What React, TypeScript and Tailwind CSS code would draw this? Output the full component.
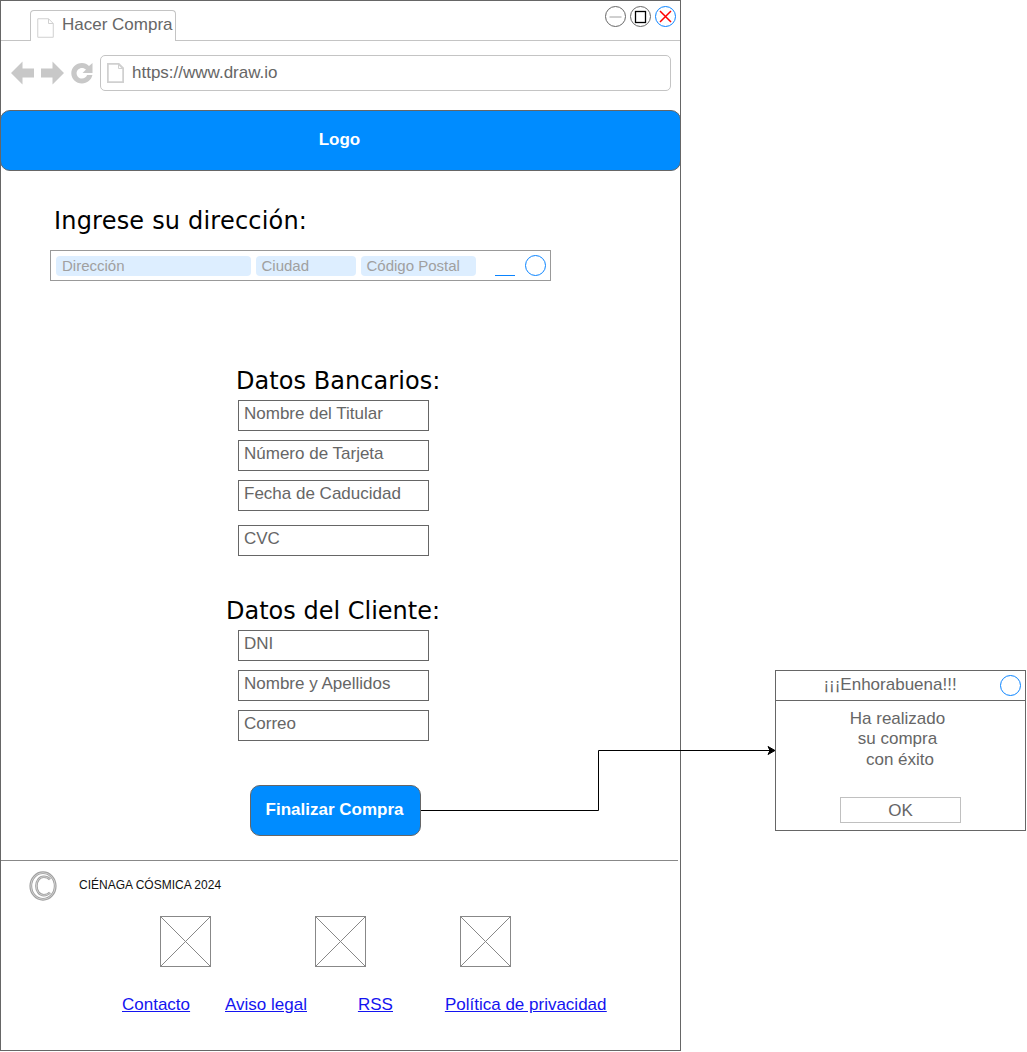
const sans = "font-['Liberation_Sans',Arial,sans-serif]";

const PageIcon = ({ className, thick = false }: { className: string; thick?: boolean }) => (
  <svg className={className} viewBox="0 0 17 20" fill="none">
    <path d="M0.75 0.75H11.5L16.25 5.5V19.25H0.75Z" fill="#fff" stroke="#d0d0d0" strokeWidth={thick ? 2 : 1} />
    <path d="M11.5 0.75V5.5H16.25" stroke="#d0d0d0" strokeWidth="1" />
  </svg>
);

const Field = ({ label, className = "" }: { label: string; className?: string }) => (
  <div className={`ml-[237px] h-[31px] w-[191px] border border-[#666] px-[5px] pt-[1px] text-[17px] leading-[23px] whitespace-nowrap text-[#666] ${className}`}>
    {label}
  </div>
);

const Pill = ({ label, className }: { label: string; className: string }) => (
  <div className={`h-[20px] rounded-[4px] bg-[#ddeeff] px-[6px] text-[15px] leading-[19px] whitespace-nowrap text-[#a0a0a0] ${className}`}>
    {label}
  </div>
);

const Placeholder = ({ className = "" }: { className?: string }) => (
  <svg className={`h-[51px] w-[51px] ${className}`} viewBox="0 0 51 51" fill="none" stroke="#888" strokeWidth="1">
    <rect x="0.5" y="0.5" width="50" height="50" />
    <path d="M0.5 0.5L50.5 50.5M50.5 0.5L0.5 50.5" />
  </svg>
);

const WindowButtons = () => (
  <div className="absolute right-[4px] top-[5px] flex gap-[4px]">
    <svg className="h-[21px] w-[21px]" viewBox="0 0 21 21" fill="none">
      <circle cx="10.5" cy="10.5" r="10" fill="#fff" stroke="#666" />
      <path d="M4.5 11H16.5" stroke="#a0a0a0" />
    </svg>
    <svg className="h-[21px] w-[21px]" viewBox="0 0 21 21" fill="none">
      <circle cx="10.5" cy="10.5" r="10" fill="#fff" stroke="#666" />
      <rect x="5.5" y="5.5" width="10" height="11" stroke="#000" strokeWidth="1.3" />
    </svg>
    <svg className="h-[21px] w-[21px]" viewBox="0 0 21 21" fill="none">
      <circle cx="10.5" cy="10.5" r="10" fill="#fff" stroke="#0a84ff" />
      <path d="M5 5L16 16M16 5L5 16" stroke="#ff0000" strokeWidth="1.5" />
    </svg>
  </div>
);

const NavIcons = () => (
  <div className="flex items-center gap-[7px]">
    <svg className="h-[24px] w-[23px]" viewBox="0 0 23 24" fill="#c8c8c8">
      <path d="M0 12L11.5 0.5V7.5H23V16.5H11.5V23.5Z" />
    </svg>
    <svg className="h-[24px] w-[23px]" viewBox="0 0 23 24" fill="#c8c8c8">
      <path d="M23 12L11.5 0.5V7.5H0V16.5H11.5V23.5Z" />
    </svg>
    <svg className="h-[24px] w-[22px]" viewBox="0 0 22 24" fill="#c8c8c8">
      <path d="M11 2C13.8 2 16.2 3.1 18 5L21.5 2V12H11.5L15 8.6C13.9 7.6 12.5 7 11 7C8 7 5.6 9.3 5.6 12.3C5.6 15.2 8 17.6 11 17.6C13.3 17.6 15.3 16.2 16.1 14.1H21.4C20.4 19 16.1 22.6 11 22.6C5 22.6 0.3 18 0.3 12.3C0.3 6.6 5 2 11 2Z" />
    </svg>
  </div>
);

const CopyrightIcon = () => (
  <svg className="h-[30px] w-[28px]" viewBox="0 0 28 30" fill="none">
    <ellipse cx="14" cy="15" rx="12.2" ry="13.3" stroke="#a0a0a0" strokeWidth="2.8" />
    <ellipse cx="14" cy="15" rx="12.2" ry="13.3" stroke="#e4e4e4" strokeWidth="0.7" />
    <path d="M21 8.5C19.5 6.8 17.2 5.8 14.8 5.8C10.4 5.8 7.4 9.8 7.4 15C7.4 20.2 10.4 24.2 14.8 24.2C17.2 24.2 19.5 23.2 21 21.5" stroke="#a0a0a0" strokeWidth="2.6" />
    <path d="M21 8.5C19.5 6.8 17.2 5.8 14.8 5.8C10.4 5.8 7.4 9.8 7.4 15C7.4 20.2 10.4 24.2 14.8 24.2C17.2 24.2 19.5 23.2 21 21.5" stroke="#e4e4e4" strokeWidth="0.7" />
  </svg>
);

const App = () => {
  return (
    <div className={`relative h-[1052px] w-[1027px] bg-white ${sans}`}>
      <div className="h-[1051px] w-[681px] overflow-hidden border border-[#666]">
        <div className="relative h-[40px] border-b border-[#c4c4c4]">
          <div className="absolute left-[29px] top-[9px] flex h-[31px] w-[146px] items-start rounded-t-[4px] border border-b-0 border-[#c4c4c4] bg-white pl-[6px] pt-[7px]">
            <PageIcon className="h-[20px] w-[17px]" />
            <span className="ml-[8px] -mt-[1px] text-[17px] leading-[16px] whitespace-nowrap text-[#666]">Hacer Compra</span>
          </div>
          <WindowButtons />
        </div>

        <div className="flex h-[69px] items-center pl-[10px] pr-[9px] pb-[5px]">
          <NavIcons />
          <div className="ml-[7px] flex h-[36px] flex-1 items-center rounded-[5px] border border-[#c4c4c4] pl-[6px]">
            <PageIcon className="h-[20px] w-[17px]" thick />
            <span className="ml-[8px] text-[17px] text-[#666]">https://www.draw.io</span>
          </div>
        </div>

        <div className="-mx-[1px] flex h-[61px] items-center justify-center rounded-[10px] border border-[#666] bg-[#008cff] pb-[2px] pr-[2px] text-[17px] font-bold text-white">
          Logo
        </div>

        <h2 className="ml-[53px] mt-[34px] font-['DejaVu_Sans',sans-serif] text-[24px] leading-[32px] tracking-[0.2px] whitespace-nowrap text-black">Ingrese su dirección:</h2>

        <div className="ml-[49px] mt-[13px] flex h-[31px] w-[501px] items-center border border-[#999] pl-[5px]">
          <Pill label="Dirección" className="w-[194.5px]" />
          <Pill label="Ciudad" className="ml-[5px] w-[100px]" />
          <Pill label="Código Postal" className="ml-[5px] w-[115px]" />
          <div className="ml-[19.5px] mt-[19px] h-[1px] w-[20px] bg-[#0a84ff]" />
          <div className="ml-[10px] h-[21px] w-[21px] rounded-full border border-[#0a84ff]" />
        </div>

        <h2 className="ml-[235px] mt-[84px] font-['DejaVu_Sans',sans-serif] text-[24px] leading-[32px] tracking-[0.06px] whitespace-nowrap text-black">Datos Bancarios:</h2>
        <Field label="Nombre del Titular" className="mt-[3px]" />
        <Field label="Número de Tarjeta" className="mt-[9px]" />
        <Field label="Fecha de Caducidad" className="mt-[9px]" />
        <Field label="CVC" className="mt-[14px]" />

        <h2 className="ml-[225px] mt-[39px] font-['DejaVu_Sans',sans-serif] text-[24px] leading-[32px] whitespace-nowrap text-black">Datos del Cliente:</h2>
        <Field label="DNI" className="mt-[3px]" />
        <Field label="Nombre y Apellidos" className="mt-[9px]" />
        <Field label="Correo" className="mt-[9px]" />

        <div className="ml-[249px] mt-[44px] flex h-[51px] w-[171px] items-center justify-center rounded-[10px] border border-[#666] bg-[#008cff] pb-[2px] pr-[2px] text-[17px] font-bold text-white">
          Finalizar Compra
        </div>

        <div className="mt-[24px] h-[1px] w-[677px] bg-[#888]" />

        <div className="mt-[10px] flex h-[30px] items-center pl-[28px]">
          <CopyrightIcon />
          <span className="ml-[22px] pb-[2px] text-[12px] text-[#111]">CIÉNAGA CÓSMICA 2024</span>
        </div>

        <div className="mt-[15px] flex pl-[159px]">
          <Placeholder />
          <Placeholder className="ml-[104px]" />
          <Placeholder className="ml-[94px]" />
        </div>

        <div className="mt-[28px] flex pl-[121px] text-[17px] leading-[20px] whitespace-nowrap text-[#1414f0] underline">
          <a href="#">Contacto</a>
          <a href="#" className="ml-[35px]">Aviso legal</a>
          <a href="#" className="ml-[51px]">RSS</a>
          <a href="#" className="ml-[52px]">Política de privacidad</a>
        </div>
      </div>

      <svg className="pointer-events-none absolute left-0 top-0 h-[1052px] w-[1027px]" viewBox="0 0 1027 1052" fill="none">
        <path d="M421 810.5H598.5V750.5H770" stroke="#000" />
        <path d="M775 750.5L768 746.5L770 750.5L768 754.5Z" fill="#000" stroke="#000" />
      </svg>

      <div className="absolute left-[775px] top-[670px] h-[161px] w-[251px] border border-[#666] bg-white text-center text-[#666]">
        <div className="relative h-[30px] border-b border-[#666] pr-[21px] text-[17px] leading-[27px]">
          ¡¡¡Enhorabuena!!!
          <div className="absolute right-[4px] top-[4px] h-[21px] w-[21px] rounded-full border border-[#0a84ff]" />
        </div>
        <p className="mt-[7.6px] pr-[6px] text-[17px] leading-[20.5px]">
          Ha realizado
          <br />
          su compra
          <br />
          <span className="pl-[5px]">con éxito</span>
        </p>
        <div className="mx-auto mt-[27px] h-[26px] w-[121px] border border-[#c0c0c0] text-[17px] leading-[25px]">OK</div>
      </div>
    </div>
  );
};

export default App;
